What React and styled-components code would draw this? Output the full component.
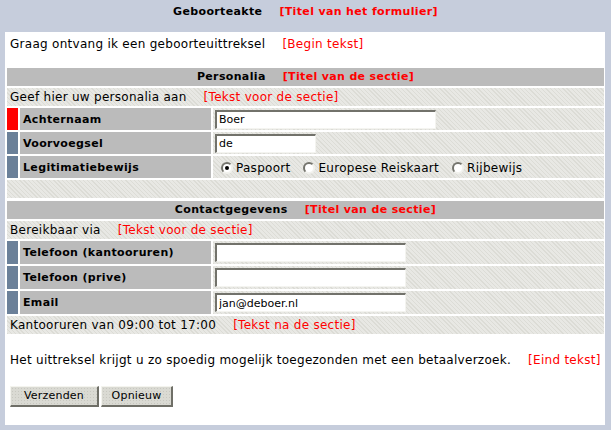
import React from 'react';
import styled, { createGlobalStyle, css } from 'styled-components';

const Global = createGlobalStyle`
  html, body { margin: 0; padding: 0; background: #c6cddc; }
  body {
    font-family: "DejaVu Sans", Verdana, sans-serif;
    font-size: 12px;
    letter-spacing: 0.28px;
    color: #000;
  }
  * { box-sizing: border-box; }
`;

const hatch = css`
  background-color: #e8e8e4;
  background-image: repeating-linear-gradient(45deg, #dcdcd6 0 1px, transparent 1px 3px);
`;

const boldText = css`
  font-size: 11px;
  font-weight: bold;
  letter-spacing: 0.35px;
`;

const Page = styled.div`
  width: 611px;
  height: 430px;
  display: flex;
  flex-direction: column;
`;

const TitleBar = styled.h1`
  margin: 0;
  height: 32px;
  padding-top: 5px;
  line-height: 14px;
  text-align: center;
  ${boldText};
`;

const Red = styled.span`
  color: #ff0000;
  margin-left: ${(p) => p.$gap ?? 17}px;
`;

const Panel = styled.div`
  margin: 0 6px 5px 5px;
  flex: 1;
  background: #fff;
  padding: 0 1px 0 2px;
  display: flex;
  flex-direction: column;
`;

const Intro = styled.p`
  margin: 0;
  height: 36px;
  padding: 5px 0 0 3px;
  line-height: 14px;
  white-space: nowrap;
`;

const Section = styled.section`
  display: grid;
  gap: 2px;
  margin-bottom: ${(p) => p.$after ?? 3}px;
`;

const SectionHead = styled.div`
  height: 18px;
  background: #bbbbbb;
  ${boldText};
  display: flex;
  align-items: center;
  justify-content: center;
  line-height: 14px;
  white-space: nowrap;
`;

const TextRow = styled.div`
  height: 18px;
  ${hatch};
  display: flex;
  align-items: center;
  padding-left: 3px;
  line-height: 14px;
  white-space: nowrap;
`;

const Field = styled.div`
  height: ${(p) => p.$h}px;
  display: grid;
  grid-template-columns: 11px 191px 1fr;
  gap: 2px;
`;

const Marker = styled.div`
  background: ${(p) => (p.$required ? '#ff0000' : '#6b8099')};
`;

const Label = styled.div`
  background: #bbbbbb;
  ${boldText};
  display: flex;
  align-items: center;
  padding-left: 3px;
  white-space: nowrap;
`;

const InputCell = styled.div`
  ${hatch};
  display: flex;
  align-items: center;
  padding-left: 2px;
`;

const TextInput = styled.input`
  width: ${(p) => p.$w}px;
  height: 19px;
  margin: 0;
  padding: 0 2px;
  font: 11px "DejaVu Sans", Verdana, sans-serif;
  letter-spacing: 0;
  color: #000;
  background: #fff;
  border-style: solid;
  border-width: 2px 1px 1px 2px;
  border-color: #72726b #f4f4f0 #f4f4f0 #72726b;
  outline: none;
`;

const RadioGroup = styled.div`
  display: flex;
  align-items: center;
  gap: 13px;
  padding-left: 6px;
  padding-top: 2px;
  white-space: nowrap;
`;

const RadioLabel = styled.label`
  display: inline-flex;
  align-items: center;
  gap: 3px;
`;

const RadioMark = styled.span`
  position: relative;
  display: inline-block;
  width: 12px;
  height: 12px;
  border-radius: 50%;
  border: 2px solid;
  border-color: #74746d #f2f2ee #f2f2ee #74746d;
  background: #fff;
  ${(p) =>
    p.$checked &&
    css`
      &::after {
        content: '';
        position: absolute;
        left: 2px;
        top: 2px;
        width: 4px;
        height: 4px;
        border-radius: 50%;
        background: #000;
      }
    `}
`;

const Closing = styled.p`
  margin: 19px 0 0;
  padding-left: 3px;
  line-height: 14px;
  white-space: nowrap;
`;

const Buttons = styled.div`
  display: flex;
  gap: 2px;
  padding-left: 3px;
  margin-top: 19px;
`;

const Button = styled.button`
  width: ${(p) => p.$w}px;
  height: 21px;
  margin: 0;
  padding: 0 0 1px;
  font: 11px "DejaVu Sans", Verdana, sans-serif;
  letter-spacing: 0.2px;
  color: #000;
  background-color: #dadad3;
  background-image: radial-gradient(#c8c8c0 0.6px, transparent 0.8px);
  background-size: 3px 3px;
  border-style: solid;
  border-width: 1px 2px 2px 1px;
  border-color: #f4f4ee #6f6f67 #6f6f67 #f4f4ee;
`;

function FieldRow({ label, required, h, children }) {
  return (
    <Field $h={h}>
      <Marker $required={required} />
      <Label>{label}</Label>
      <InputCell>{children}</InputCell>
    </Field>
  );
}

function Radio({ checked, children }) {
  return (
    <RadioLabel>
      <RadioMark $checked={checked} />
      {children}
    </RadioLabel>
  );
}

export default function App() {
  return (
    <>
      <Global />
      <Page>
        <TitleBar>
          Geboorteakte<Red>[Titel van het formulier]</Red>
        </TitleBar>
        <Panel>
          <Intro>
            Graag ontvang ik een geboorteuittreksel<Red>[Begin tekst]</Red>
          </Intro>

          <Section>
            <SectionHead>
              Personalia<Red>[Titel van de sectie]</Red>
            </SectionHead>
            <TextRow>
              Geef hier uw personalia aan<Red>[Tekst voor de sectie]</Red>
            </TextRow>
            <FieldRow label="Achternaam" required h={22}>
              <TextInput $w={221} defaultValue="Boer" />
            </FieldRow>
            <FieldRow label="Voorvoegsel" h={22}>
              <TextInput $w={101} defaultValue="de" />
            </FieldRow>
            <FieldRow label="Legitimatiebewijs" h={22}>
              <RadioGroup>
                <Radio checked>Paspoort</Radio>
                <Radio>Europese Reiskaart</Radio>
                <Radio>Rijbewijs</Radio>
              </RadioGroup>
            </FieldRow>
            <TextRow />
          </Section>

          <Section $after={0}>
            <SectionHead>
              Contactgegevens<Red>[Titel van de sectie]</Red>
            </SectionHead>
            <TextRow>
              Bereikbaar via<Red>[Tekst voor de sectie]</Red>
            </TextRow>
            <FieldRow label="Telefoon (kantooruren)" h={23}>
              <TextInput $w={191} defaultValue="" />
            </FieldRow>
            <FieldRow label="Telefoon (prive)" h={23}>
              <TextInput $w={191} defaultValue="" />
            </FieldRow>
            <FieldRow label="Email" h={23}>
              <TextInput $w={191} defaultValue="jan@deboer.nl" />
            </FieldRow>
            <TextRow>
              Kantooruren van 09:00 tot 17:00<Red>[Tekst na de sectie]</Red>
            </TextRow>
          </Section>

          <Closing>
            Het uittreksel krijgt u zo spoedig mogelijk toegezonden met een betaalverzoek.
            <Red>[Eind tekst]</Red>
          </Closing>

          <Buttons>
            <Button $w={89} type="button">Verzenden</Button>
            <Button $w={72} type="button">Opnieuw</Button>
          </Buttons>
        </Panel>
      </Page>
    </>
  );
}
